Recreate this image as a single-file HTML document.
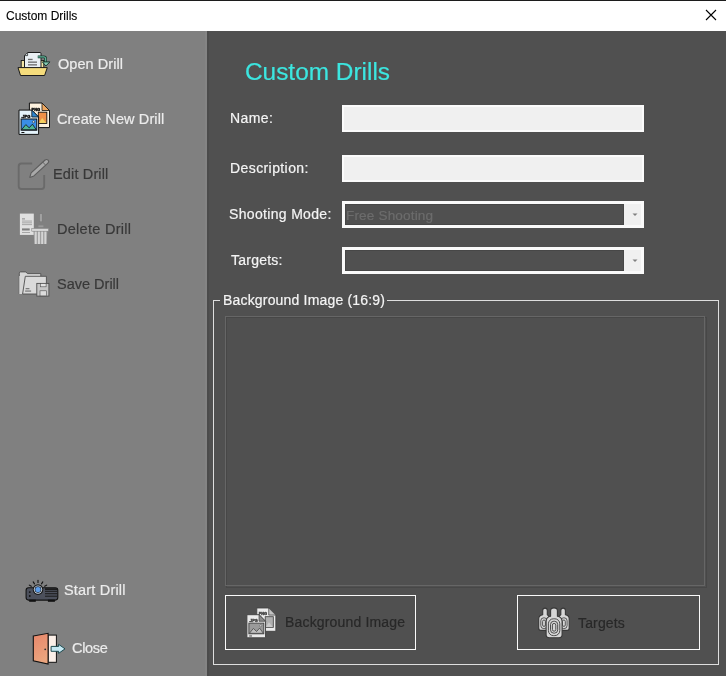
<!DOCTYPE html>
<html><head><meta charset="utf-8">
<style>
*{margin:0;padding:0;box-sizing:border-box}
html,body{width:726px;height:676px;overflow:hidden;background:#505050;font-family:"Liberation Sans",sans-serif}
.a{position:absolute}
.t{position:absolute;white-space:nowrap;line-height:1;will-change:transform;-webkit-text-stroke:0.2px currentColor}
.tb{background:#f0f0f0;border:2px solid #fbfbfb}
.cb{border:3px solid #fafafa;background:#505050}
.cbin{border:1px solid #474747}
.dd{background:#f0f0f0}
</style></head><body>
<div class="a" style="left:0;top:0;width:726px;height:1px;background:#1c1c1c"></div>
<div class="a" style="left:0;top:1px;width:726px;height:30px;background:#fff"></div>
<div id="t_title" class="t" style="left:6px;top:10px;font-size:12px;color:#000;letter-spacing:0px;-webkit-text-stroke:0.12px currentColor">Custom Drills</div>
<svg class="a" style="left:705px;top:9px" width="12" height="12" viewBox="0 0 12 12"><path d="M1 1L11 11M11 1L1 11" stroke="#000" stroke-width="1.1"/></svg>
<div class="a" style="left:0;top:31px;width:207px;height:645px;background:#808080"></div>
<div class="a" style="left:205px;top:31px;width:2px;height:645px;background:#848484"></div>
<div class="a" style="left:207px;top:31px;width:519px;height:645px;background:#505050"></div>
<div class="a" style="left:207px;top:31px;width:2px;height:645px;background:#4b4b4b"></div>
<div id="t_open" class="t" style="left:57.5px;top:57px;font-size:14.5px;color:#ececec;letter-spacing:0.06px">Open Drill</div>
<div id="t_create" class="t" style="left:56.5px;top:112px;font-size:14.5px;color:#ececec;letter-spacing:0.11px">Create New Drill</div>
<div id="t_edit" class="t" style="left:53px;top:167px;font-size:14.5px;color:#383838;letter-spacing:0.15px">Edit Drill</div>
<div id="t_delete" class="t" style="left:57px;top:221.5px;font-size:14.5px;color:#383838;letter-spacing:0.28px">Delete Drill</div>
<div id="t_save" class="t" style="left:56.8px;top:276.5px;font-size:14.5px;color:#383838;letter-spacing:0px">Save Drill</div>
<div id="t_start" class="t" style="left:64px;top:583px;font-size:14.5px;color:#ececec;letter-spacing:0.18px">Start Drill</div>
<div id="t_close" class="t" style="left:72px;top:640.5px;font-size:14.5px;color:#ececec;letter-spacing:-0.33px">Close</div>
<div id="t_head" class="t" style="left:245px;top:59.5px;font-size:24.4px;color:#3ce6e0;letter-spacing:0px">Custom Drills</div>
<div id="t_name" class="t" style="left:230px;top:111px;font-size:14px;color:#f4f4f4;letter-spacing:0.42px">Name:</div>
<div id="t_desc" class="t" style="left:230px;top:161px;font-size:14px;color:#f4f4f4;letter-spacing:0.41px">Description:</div>
<div id="t_shoot" class="t" style="left:229.2px;top:207px;font-size:14px;color:#f4f4f4;letter-spacing:0.33px">Shooting Mode:</div>
<div id="t_targ" class="t" style="left:230.5px;top:253px;font-size:14px;color:#f4f4f4;letter-spacing:0.24px">Targets:</div>
<div class="a tb" style="left:342px;top:105px;width:302px;height:27px"></div>
<div class="a tb" style="left:342px;top:155px;width:302px;height:27px"></div>
<div class="a cb" style="left:342px;top:201px;width:302px;height:27px"></div>
<div class="a cbin" style="left:345px;top:204px;width:279px;height:21px"></div>
<div class="a dd" style="left:624px;top:204px;width:17px;height:21px"></div>
<div id="t_free" class="t" style="left:346.2px;top:208.5px;font-size:13.6px;color:#6c6c6c;letter-spacing:0.14px">Free Shooting</div>
<svg class="a" style="left:631px;top:212px" width="8" height="5" viewBox="0 0 8 5"><path d="M1.5 1.5H6.5L4 4Z" fill="#808080"/></svg>
<div class="a cb" style="left:342px;top:247px;width:302px;height:27px"></div>
<div class="a cbin" style="left:345px;top:250px;width:279px;height:21px"></div>
<div class="a dd" style="left:624px;top:250px;width:17px;height:21px"></div>
<svg class="a" style="left:631px;top:258px" width="8" height="5" viewBox="0 0 8 5"><path d="M1.5 1.5H6.5L4 4Z" fill="#808080"/></svg>
<div class="a" style="left:213px;top:300px;width:506px;height:365px;border:1px solid #dedede"></div>
<div class="a" style="left:220px;top:292px;width:167px;height:16px;background:#505050"></div>
<div id="t_grp" class="t" style="left:223px;top:293px;font-size:14px;color:#f4f4f4;letter-spacing:0.18px">Background Image (16:9)</div>
<div class="a" style="left:226px;top:317px;width:481px;height:271px;border:1px solid #474747"></div>
<div class="a" style="left:225px;top:316px;width:480px;height:270px;border:1px solid #666"></div>
<div class="a" style="left:225px;top:595px;width:191px;height:55px;border:1px solid #fafafa"></div>
<div id="t_bgbtn" class="t" style="left:285px;top:615px;font-size:14px;color:#282828;letter-spacing:0.17px">Background Image</div>
<div class="a" style="left:517px;top:595px;width:183px;height:55px;border:1px solid #fafafa"></div>
<div id="t_tgbtn" class="t" style="left:577.5px;top:616px;font-size:14px;color:#282828;letter-spacing:0.15px">Targets</div>
<svg class="a" style="left:0;top:0" width="726" height="676" viewBox="0 0 726 676">
<defs>
<linearGradient id="dg" x1="0" y1="0" x2="0.3" y2="1"><stop offset="0" stop-color="#e8866a"/><stop offset="1" stop-color="#eba57e"/></linearGradient>
<g id="pics">
 <path d="M29.4,103 H42 L49.5,110.5 V127.6 H29.4 Z" fill="var(--p2)" stroke="var(--k)" stroke-width="1"/>
 <path d="M42,103 V110.5 H49.5 Z" fill="var(--f2)" stroke="var(--k)" stroke-width="0.8"/>
 <text x="31.5" y="110.6" font-family="Liberation Sans" font-weight="bold" font-size="4.4" textLength="8.7" lengthAdjust="spacingAndGlyphs" fill="var(--k)" stroke="var(--k)" stroke-width="0.45">PNG</text>
 <rect x="38.3" y="112.2" width="8.5" height="11.2" fill="var(--i2)" stroke="var(--k)" stroke-width="0.9"/>
 <path d="M38.8,123 L42.2,118 L46.3,123 Z" fill="var(--m2)"/>
 <path d="M19,110.1 H31.8 L38.6,117 V134.4 H19 Z" fill="var(--p1)" stroke="var(--k)" stroke-width="1"/>
 <path d="M31.8,110.1 V117 H38.6 Z" fill="var(--f1)" stroke="var(--k)" stroke-width="0.8"/>
 <rect x="21.2" y="116.9" width="0.9" height="0.9" fill="var(--k)"/>
 <text x="22.3" y="117.9" font-family="Liberation Sans" font-weight="bold" font-size="4.4" textLength="8.0" lengthAdjust="spacingAndGlyphs" fill="var(--k)" stroke="var(--k)" stroke-width="0.45">JPG</text>
 <rect x="21.1" y="119" width="15.7" height="11.2" fill="var(--i1)" stroke="var(--k)" stroke-width="1"/>
 <path d="M21.6,129.7 L25.8,124.6 L29.2,127.8 L32.4,124.2 L36.3,129.7 Z" fill="var(--m1)" stroke="var(--k)" stroke-width="0.8"/>
 <circle cx="33.6" cy="121.8" r="1.1" fill="var(--p1)" stroke="var(--k)" stroke-width="0.5"/>
 <rect x="21.4" y="132" width="3" height="1" fill="var(--k)"/>
</g>
</defs>

<!-- Open Drill -->
<rect x="21.2" y="60.5" width="22.6" height="7.5" fill="#f3e6a6" stroke="#1a1a1a" stroke-width="0.9"/>
<path d="M24.5,68 V55.6 L27.6,52.5 H40 Q41,52.5 41,53.5 V68 Z" fill="#e9eff3" stroke="#1a1a1a" stroke-width="1" stroke-linejoin="round"/>
<path d="M24.8,55.6 H27.6 V52.8" fill="#c9d2d8" stroke="#1a1a1a" stroke-width="0.7"/>
<rect x="28" y="58.8" width="4.6" height="1.3" fill="#6b6b6b"/>
<rect x="28" y="61.5" width="9" height="1.3" fill="#6b6b6b"/>
<rect x="28" y="64.2" width="9" height="1.3" fill="#6b6b6b"/>
<path d="M18,67.6 H47.3 L44.6,75.5 H20.5 Z" fill="#f5dc7c" stroke="#1a1a1a" stroke-width="1"/>
<path d="M37.8,56.9 H43.8 Q45.6,56.9 45.6,58.8 V62" fill="none" stroke="#16352c" stroke-width="2.7"/>
<path d="M37.8,56.9 H43.8 Q45.6,56.9 45.6,58.8 V62" fill="none" stroke="#5fae94" stroke-width="1.3"/>
<path d="M42.4,61.9 H49.9 L45.9,66 Z" fill="#86cdb6" stroke="#16352c" stroke-width="1" stroke-linejoin="round"/>
<!-- Create New Drill -->
<g style="--k:#111;--p1:#e4f3fb;--p2:#fdf1de;--f1:#2e86d0;--f2:#f0a860;--i1:#3a8ee8;--i2:#f09048;--m1:#4fb596;--m2:#f5d060"><use href="#pics"/></g>

<!-- Edit Drill -->
<path d="M32.2,163.5 H21.4 Q18.7,163.5 18.7,166.2 V186.3 Q18.7,189 21.4,189 H41.5 Q44.2,189 44.2,186.3 V175" fill="none" stroke="#6a6a6a" stroke-width="1.9"/>
<path d="M29.8,177.4 L31.1,172.8 L45.1,160.0 A2.05,2.05 0 0 1 47.9,163.1 L33.9,175.9 Z" fill="#a9a9a9" stroke="#5c5c5c" stroke-width="1.1" stroke-linejoin="round"/>
<line x1="42.6" y1="161.9" x2="45.3" y2="164.9" stroke="#5c5c5c" stroke-width="0.9"/>
<!-- Delete Drill -->
<rect x="19.9" y="213.6" width="13.9" height="21.3" fill="#e0e0e0"/>
<rect x="22" y="218.4" width="3" height="1" fill="#8a8a8a"/>
<rect x="22" y="220.6" width="10" height="0.9" fill="#a0a0a0"/>
<rect x="22" y="222.4" width="10" height="0.9" fill="#a0a0a0"/>
<rect x="22" y="224.2" width="10" height="0.9" fill="#a0a0a0"/>
<rect x="22" y="228.4" width="7.7" height="2.1" fill="#7e7e7e"/>
<rect x="22" y="232" width="8" height="0.9" fill="#a0a0a0"/>
<rect x="39.6" y="213.8" width="2.6" height="8" fill="#a2a2a2" stroke="#777" stroke-width="0.5"/>
<rect x="38.4" y="225.4" width="5" height="1.8" fill="#9a9a9a"/>
<path d="M33.6,231 H47.4 L46.6,244.1 H34.4 Z" fill="#a0a0a0"/>
<rect x="34.8" y="231" width="1.9" height="13" fill="#d4d4d4"/>
<rect x="38.0" y="231" width="1.9" height="13" fill="#d4d4d4"/>
<rect x="41.2" y="231" width="1.9" height="13" fill="#d4d4d4"/>
<rect x="44.4" y="231" width="1.9" height="13" fill="#d4d4d4"/>
<rect x="31.8" y="228.4" width="16.8" height="2.8" fill="#d8d8d8" stroke="#7a7a7a" stroke-width="0.5"/>

<!-- Save Drill -->
<path d="M19.3,294 V273.2 Q19.3,271.9 20.6,271.9 H25.8 L27.4,273.6 H40.8 V276.3" fill="#d6d6d6" stroke="#4e4e4e" stroke-width="0.9"/>
<path d="M19.3,294 V276 H25 L22.6,294 Z" fill="#d6d6d6"/>
<path d="M25.3,276.3 H46.4 V294 H22.6 Z" fill="#dadada" stroke="#4e4e4e" stroke-width="0.9"/>
<rect x="25.6" y="288.3" width="3.8" height="0.9" fill="#555"/>
<rect x="25.1" y="290.6" width="6" height="0.9" fill="#555"/>
<rect x="36.8" y="283.4" width="12.1" height="12.7" fill="#c6c6c6" stroke="#4e4e4e" stroke-width="0.9"/>
<rect x="40.3" y="283.6" width="5.8" height="3.2" fill="#e2e2e2" stroke="#4e4e4e" stroke-width="0.6"/>
<rect x="40" y="290.8" width="6.5" height="5.1" fill="#dcdcdc" stroke="#4e4e4e" stroke-width="0.6"/>

<!-- Start Drill projector -->
<g stroke="#111" stroke-width="1.1" stroke-linecap="round">
 <line x1="38" y1="580.4" x2="38" y2="582.4"/>
 <line x1="33.2" y1="581.9" x2="34.5" y2="583.9"/>
 <line x1="42.8" y1="581.9" x2="41.5" y2="583.9"/>
 <line x1="29.3" y1="585.1" x2="31.3" y2="586.3"/>
 <line x1="46.7" y1="585.1" x2="44.7" y2="586.3"/>
</g>
<rect x="26.1" y="587.7" width="31.7" height="12.4" rx="2.5" fill="#4c505c" stroke="#111" stroke-width="1.1"/>
<rect x="29.2" y="599.6" width="6.6" height="2.2" fill="#111"/>
<rect x="47.9" y="599.6" width="7" height="2.2" fill="#111"/>
<rect x="45" y="588.2" width="12.3" height="1.8" fill="#1c1c1c"/>
<rect x="45" y="590.8" width="12.3" height="1" fill="#1c1c1c"/>
<rect x="45" y="593.2" width="12.3" height="1" fill="#1c1c1c"/>
<rect x="45" y="595.7" width="12.3" height="1" fill="#1c1c1c"/>
<circle cx="29.8" cy="592.1" r="0.9" fill="#111"/>
<circle cx="29.8" cy="596" r="0.9" fill="#111"/>
<circle cx="38" cy="589.6" r="5.3" fill="#1a1a1a"/>
<circle cx="38" cy="589.6" r="4.2" fill="#d2dde8"/>
<circle cx="38" cy="589.6" r="3.3" fill="#1f2a3a"/>
<circle cx="38" cy="589.6" r="2.6" fill="#5d9de8"/>

<!-- Close door -->
<rect x="48.1" y="635.1" width="8.3" height="27.2" fill="#fbefe8" stroke="#111" stroke-width="1"/>
<path d="M33.3,636 L48.1,633.3 V664.1 L33.3,660.8 Z" fill="url(#dg)" stroke="#111" stroke-width="1.1"/>
<circle cx="45.2" cy="649.3" r="0.9" fill="#333"/>
<path d="M51.1,646.4 H58.6 V644.3 L65,648.85 L58.6,653.4 V651.3 H51.1 Z" fill="#c6e8f2" stroke="#1d4a50" stroke-width="1"/>

<!-- BG button icon -->
<g transform="translate(246.9,614.7) scale(0.95) translate(-19,-110.1)" style="--k:#444;--p1:#eaeaea;--p2:#ececec;--f1:#8a8a8a;--f2:#c4c4c4;--i1:#9a9a9a;--i2:#b0b0b0;--m1:#c0c0c0;--m2:#cacaca"><use href="#pics"/></g>

<!-- Targets icon -->
<g fill="#d6d6d6" stroke="#383838" stroke-width="1.1" stroke-linejoin="round">
 <path d="M542.7,614.8 V610.6 Q542.7,608.1 545,608.1 Q547.3,608.1 547.3,610.6 V614.8 Q549.3,615.6 549.3,618.8 V628 Q549.3,630.4 547,630.4 H541 Q538.7,630.4 538.7,628 V618.8 Q538.7,615.6 542.7,614.8 Z"/>
 <path d="M560.8,614.8 V610.6 Q560.8,608.1 563.1,608.1 Q565.4,608.1 565.4,610.6 V614.8 Q569.2,615.6 569.2,618.8 V628 Q569.2,630.4 567,630.4 H561 Q558.7,630.4 558.7,628 V618.8 Q558.7,615.6 560.8,614.8 Z"/>
</g>
<g fill="none" stroke="#404040" stroke-width="0.85">
 <rect x="540.8" y="617.8" width="6.4" height="10.8" rx="3"/>
 <rect x="542.6" y="620" width="2.8" height="6.4" rx="1.4"/>
 <rect x="560.7" y="617.8" width="6.4" height="10.8" rx="3"/>
 <rect x="562.5" y="620" width="2.8" height="6.4" rx="1.4"/>
</g>
<path d="M550.6,616.2 V610.8 Q550.6,607.9 554,607.9 Q557.4,607.9 557.4,610.8 V616.2 Q562.1,617 562.1,621.5 V634.5 Q562.1,637.7 559,637.7 H549.2 Q546.1,637.7 546.1,634.5 V621.5 Q546.1,617 550.6,616.2 Z" fill="#d6d6d6" stroke="#383838" stroke-width="1.1" stroke-linejoin="round"/>
<g fill="none" stroke="#3c3c3c" stroke-width="0.9">
 <rect x="548.4" y="618.8" width="11.4" height="16.8" rx="5"/>
 <rect x="550.5" y="621.2" width="7.2" height="12" rx="3.4"/>
 <rect x="552.4" y="623.4" width="3.4" height="7.8" rx="1.7"/>
</g>
</svg>
</body></html>
